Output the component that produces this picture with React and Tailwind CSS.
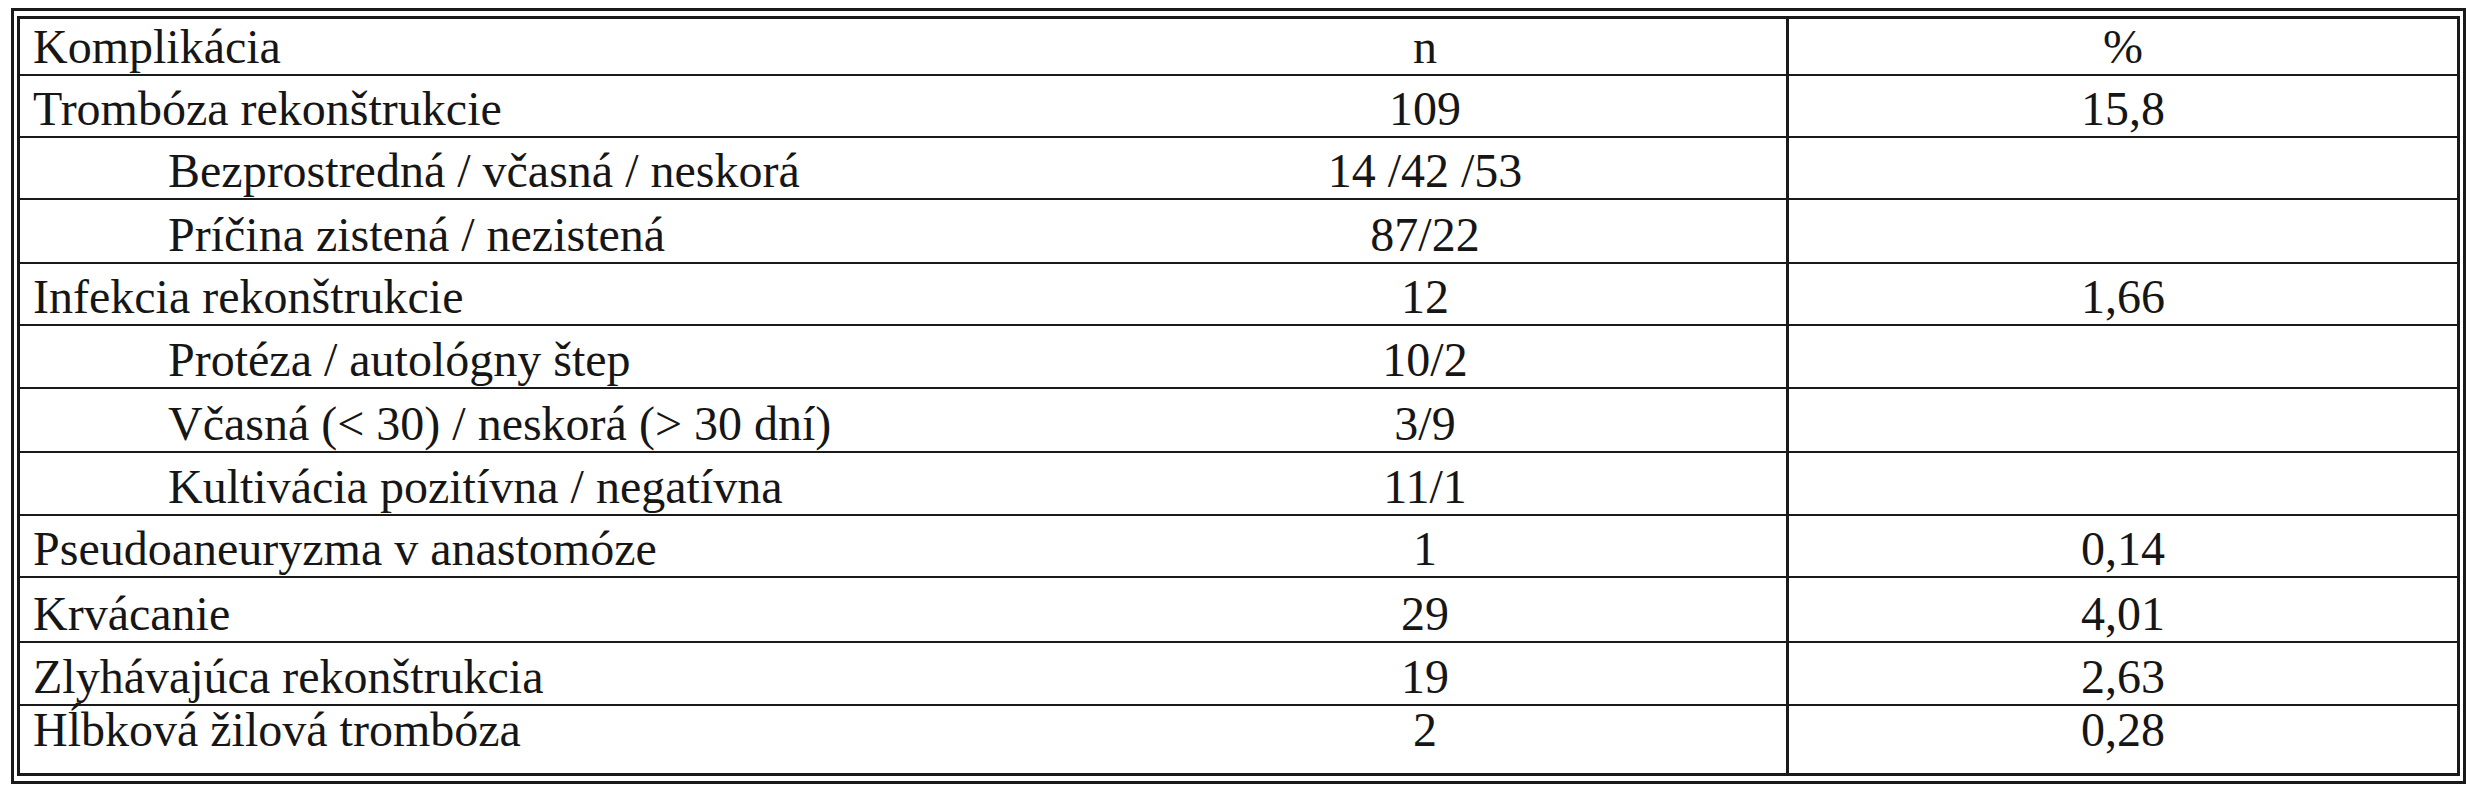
import React from "react";

const rows = [
  { label: "Trombóza rekonštrukcie", n: "109", p: "15,8", h: "h-[62px]" },
  { label: "Bezprostredná / včasná / neskorá", n: "14 /42 /53", p: "", sub: true, h: "h-[62px]" },
  { label: "Príčina zistená / nezistená", n: "87/22", p: "", sub: true, h: "h-[64px]" },
  { label: "Infekcia rekonštrukcie", n: "12", p: "1,66", h: "h-[62px]" },
  { label: "Protéza / autológny štep", n: "10/2", p: "", sub: true, h: "h-[63px]" },
  { label: "Včasná (< 30) / neskorá (> 30 dní)", n: "3/9", p: "", sub: true, h: "h-[64px]" },
  { label: "Kultivácia pozitívna / negatívna", n: "11/1", p: "", sub: true, h: "h-[63px]" },
  { label: "Pseudoaneuryzma v anastomóze", n: "1", p: "0,14", h: "h-[62px]" },
  { label: "Krvácanie", n: "29", p: "4,01", h: "h-[65px]" },
  { label: "Zlyhávajúca rekonštrukcia", n: "19", p: "2,63", h: "h-[63px]" },
];

function Row({ label, n, p, sub, h, last }) {
  const pb = last ? "pb-[19px]" : "pb-[3px]";
  return (
    <div className={`flex ${h} ${last ? "" : "border-b-2 border-[#1a1a1a]"}`}>
      <div className={`w-[1044px] shrink-0 flex items-end ${pb} ${sub ? "pl-[148px]" : "pl-[13px]"}`}>
        <span className="leading-[48px] whitespace-pre">{label}</span>
      </div>
      <div className={`w-[722px] shrink-0 flex items-end justify-center ${pb}`}>
        <span className="leading-[48px]">{n}</span>
      </div>
      <div className={`w-[671px] shrink-0 border-l-[3px] border-[#1a1a1a] flex items-end justify-center ${pb}`}>
        <span className="leading-[48px]">{p}</span>
      </div>
    </div>
  );
}

export default function App() {
  return (
    <div
      className="w-[2479px] h-[800px] bg-white pl-[11px] pt-[8px] text-[48px] text-[#161616]"
      style={{ fontFamily: '"Liberation Serif", "Times New Roman", serif' }}
    >
      <div className="w-[2455px] h-[776px] border-[3px] border-[#1a1a1a] px-[3px] py-[5px]">
        <div className="w-[2443px] h-[760px] border-[3px] border-[#1a1a1a] flex flex-col">
          <Row label="Komplikácia" n="n" p="%" h="h-[57px]" />
          {rows.map((r, i) => (
            <Row key={i} {...r} />
          ))}
          <Row label="Hĺbková žilová trombóza" n="2" p="0,28" h="h-[67px]" last />
        </div>
      </div>
    </div>
  );
}
